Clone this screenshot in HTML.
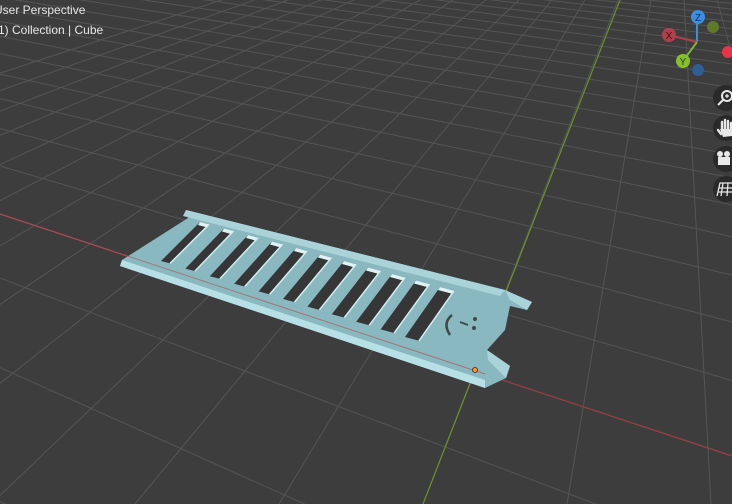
<!DOCTYPE html>
<html><head><meta charset="utf-8"><style>
html,body{margin:0;padding:0;width:732px;height:504px;overflow:hidden;background:#3d3d3d;}
.t{position:absolute;color:#e6e6e6;font:12px "Liberation Sans",sans-serif;left:-6px;line-height:14px;}
</style></head><body>
<svg id="s" width="732" height="504" style="position:absolute;left:0;top:0;display:block">
<g id="grid" stroke="#555" stroke-width="1"></g>
<line x1="0" y1="214" x2="732" y2="456" stroke="#9a3c44" stroke-width="1.2"/>
<line x1="423" y1="504" x2="620" y2="0" stroke="#6f8f2c" stroke-width="1.2"/>
<polygon points="186,210 505,290 532,302 527,310 510,306 505,330 487,350 510,366 506,378 485,388 120,266 122,260 188,218" fill="#8ab8c0"/>
<polygon points="186,210 505,290 500,296 183,216" fill="#a9d3d9"/>
<polygon points="122,260 485,380 485,388 120,266" fill="#b6e0e5"/>
<polygon points="505,290 532,302 527,310 510,300" fill="#a9d3d9"/>
<polygon points="487,350 510,366 506,378 488,360" fill="#a9d3d9"/>
<line x1="0" y1="214" x2="485" y2="374" stroke="#b0575f" stroke-width="1" opacity="0.7"/>
<g id="slots"></g>
<path d="M452,315 q-10,8 -2,20" fill="none" stroke="#3d4a4c" stroke-width="2.5"/>
<line x1="460" y1="322" x2="468" y2="325" stroke="#3d4a4c" stroke-width="2"/>
<circle cx="475" cy="319" r="2" fill="#3d4a4c"/><circle cx="474" cy="328" r="2" fill="#3d4a4c"/>
<circle cx="475" cy="370" r="2.5" fill="#ff9a1a" stroke="#222" stroke-width="0.8"/>
<line x1="697" y1="18" x2="697" y2="42" stroke="#3b8ee0" stroke-width="2"/>
<line x1="669" y1="35" x2="697" y2="42" stroke="#b0404c" stroke-width="2"/>
<line x1="683" y1="61" x2="697" y2="42" stroke="#7fb530" stroke-width="2"/>
<circle cx="713" cy="27" r="6" fill="#5c7a2a"/>
<circle cx="728" cy="52" r="6" fill="#e8344a"/>
<circle cx="698" cy="70" r="6" fill="#2f5e94"/>
<circle cx="669" cy="35" r="7" fill="#b0404c"/><text x="669" y="39" font-size="10" text-anchor="middle" fill="#3a1418" font-family="Liberation Sans">X</text>
<circle cx="698" cy="17" r="7" fill="#3b8ee0"/><text x="698" y="21" font-size="10" text-anchor="middle" fill="#102c50" font-family="Liberation Sans">Z</text>
<circle cx="683" cy="61" r="7" fill="#85c02a"/><text x="683" y="65" font-size="10" text-anchor="middle" fill="#2a3e0c" font-family="Liberation Sans">Y</text>
<g fill="#2a2a2a">
<circle cx="726" cy="98" r="13"/><circle cx="726" cy="128" r="13"/><circle cx="726" cy="159" r="13"/><circle cx="726" cy="189" r="13"/>
</g>
<g stroke="#e8e8e8" fill="none" stroke-width="2">
<circle cx="727" cy="96" r="5"/><line x1="723" y1="100" x2="718" y2="105"/>
<line x1="725" y1="96" x2="729" y2="96" stroke-width="1.3"/><line x1="727" y1="94" x2="727" y2="98" stroke-width="1.3"/>
</g>
<g stroke="#e8e8e8" stroke-width="2.4" stroke-linecap="round" fill="none">
<path d="M722,130 L722,122 M725,129 L725,120 M728,129 L728,121 M731,130 L731,123"/>
<path d="M718,130 L721,134"/>
</g>
<path d="M720,129 L733,129 L732,136 L723,137 Z" fill="#e8e8e8"/>
<rect x="718" y="157" width="12" height="8" fill="#e8e8e8"/><circle cx="720" cy="154" r="3" fill="#e8e8e8"/><circle cx="727" cy="154" r="3" fill="#e8e8e8"/>
<g stroke="#e8e8e8" stroke-width="1.3" fill="none"><path d="M717,196 L720,183 L732,183 M719,188 L732,188 M718,192 L732,192 M723,183 L721,196 M728,183 L727,196"/></g>
</svg>
<div class="t" style="top:3px">User Perspective</div>
<div class="t" style="top:23px">(1) Collection | Cube</div>
<script>
var ns="http://www.w3.org/2000/svg",g=document.getElementById('grid');
function L(p,a,b,c,d){var l=document.createElementNS(ns,'line');l.setAttribute('x1',a);l.setAttribute('y1',b);l.setAttribute('x2',c);l.setAttribute('y2',d);p.appendChild(l);}
var VAx=-1300,VAy=-215;
function yk(k){return 2714/(7.03-k)-172;}
for(var k=-40;k<7;k++){var y=yk(k);var s=(y-VAy)/(0-VAx);L(g,0,y,732,y+s*732);}
var VBx=676,VBy=-150;
for(var k=-12;k<30;k++){var x=423+144*k;L(g,VBx,VBy,x,504);}
var sg=document.getElementById('slots');
for(var i=0;i<11;i++){var tx=200+24*i,ty=222+6.5*i,bx=161+24.4*i,by=261+7.6*i,w=9+0.5*i,h=w*0.27;
var p=document.createElementNS(ns,'polygon');p.setAttribute('points',tx+','+ty+' '+(tx+w)+','+(ty+h)+' '+(bx+w)+','+(by+h)+' '+bx+','+by);p.setAttribute('fill','#363636');sg.appendChild(p);
var e=document.createElementNS(ns,'polygon');e.setAttribute('points',tx+','+ty+' '+(tx+w)+','+(ty+h)+' '+(tx+w-2)+','+(ty+h+3)+' '+(tx-2)+','+(ty+3));e.setAttribute('fill','#dff3f5');sg.appendChild(e);
var r=document.createElementNS(ns,'line');r.setAttribute('x1',tx+w);r.setAttribute('y1',ty+h);r.setAttribute('x2',bx+w);r.setAttribute('y2',by+h);r.setAttribute('stroke','#d0eef1');r.setAttribute('stroke-width','1.5');sg.appendChild(r);}
</script>
</body></html>
